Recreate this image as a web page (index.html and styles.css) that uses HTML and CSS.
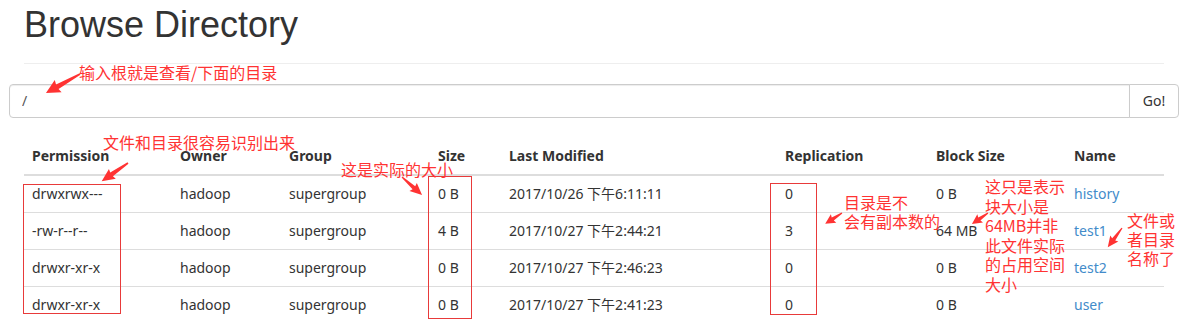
FILE: index.html
```html
<!DOCTYPE html>
<html lang="zh-CN">
<head>
  <meta charset="UTF-8" />
  <meta name="viewport" content="width=device-width, initial-scale=1" />
  <title>Browsing HDFS</title>
  <link rel="stylesheet" href="styles.css">
</head>
<body>

  <div class="page">
    <h1 class="title">Browse Directory</h1>
    <hr class="rule">

    <form class="search">
      <input class="path" type="text" value="/" />
      <button class="go" type="button">Go!</button>
    </form>

    <table class="listing">
      <colgroup>
        <col class="c-perm"><col class="c-owner"><col class="c-group"><col class="c-size">
        <col class="c-mod"><col class="c-rep"><col class="c-block"><col class="c-name">
      </colgroup>
      <thead>
        <tr>
          <th>Permission</th><th>Owner</th><th>Group</th><th>Size</th>
          <th>Last Modified</th><th>Replication</th><th>Block Size</th><th>Name</th>
        </tr>
      </thead>
      <tbody>
        <tr>
          <td>drwxrwx---</td><td>hadoop</td><td>supergroup</td><td>0 B</td>
          <td>2017/10/26 下午6:11:11</td><td>0</td><td>0 B</td><td><a href="#">history</a></td>
        </tr>
        <tr>
          <td>-rw-r--r--</td><td>hadoop</td><td>supergroup</td><td>4 B</td>
          <td>2017/10/27 下午2:44:21</td><td>3</td><td>64 MB</td><td><a href="#">test1</a></td>
        </tr>
        <tr>
          <td>drwxr-xr-x</td><td>hadoop</td><td>supergroup</td><td>0 B</td>
          <td>2017/10/27 下午2:46:23</td><td>0</td><td>0 B</td><td><a href="#">test2</a></td>
        </tr>
        <tr>
          <td>drwxr-xr-x</td><td>hadoop</td><td>supergroup</td><td>0 B</td>
          <td>2017/10/27 下午2:41:23</td><td>0</td><td>0 B</td><td><a href="#">user</a></td>
        </tr>
      </tbody>
    </table>
  </div>

  <!-- red annotations drawn over the screenshot -->
  <div class="notes">
    <div class="box box-perm"></div>
    <div class="box box-size"></div>
    <div class="box box-rep"></div>

    <div class="note note-path">输入根就是查看/下面的目录</div>
    <div class="note note-perm">文件和目录很容易识别出来</div>
    <div class="note note-size">这是实际的大小</div>
    <div class="note note-rep">目录是不<br>会有副本数的</div>
    <div class="note note-block">这只是表示<br>块大小是<br>64MB并非<br>此文件实际<br>的占用空间<br>大小</div>
    <div class="note note-name">文件或<br>者目录<br>名称了</div>

    <svg class="arrows" width="1181" height="319" viewBox="0 0 1181 319">
      <g fill="#f33">
        <polygon transform="translate(80 74) rotate(150.8)" points="0,-0.8 26,-2.6 25,-7 39,0 25,7 26,2.6 0,0.8" />
        <polygon transform="translate(128 163) rotate(145.3)" points="0,-0.8 20,-2.4 19,-6 32,0 19,6 20,2.4 0,0.8" />
        <polygon transform="translate(402 177) rotate(42)" points="0,-0.6 16,-2 15,-5.5 27,0 15,5.5 16,2 0,0.6" />
        <polygon transform="translate(842 213) rotate(147.1)" points="0,-0.6 11,-1.9 10,-5 20,0 10,5 11,1.9 0,0.6" />
        <polygon transform="translate(988 213) rotate(145.5)" points="0,-0.6 10.5,-1.9 9.5,-5 19.5,0 9.5,5 10.5,1.9 0,0.6" />
        <polygon transform="translate(1122 228) rotate(126.4)" points="0,-0.6 14,-1.9 13,-5 24,0 13,5 14,1.9 0,0.6" />
      </g>
    </svg>
  </div>

</body>
</html>
```

FILE: styles.css
```css
html, body {
  margin: 0;
  overflow: hidden;
}
body {
  background: #fff;
  color: #333;
  font-family: "Noto Sans", "Noto Sans CJK SC", sans-serif;
  font-size: 14px;
  line-height: 20px;
}
.page {
  padding: 0 17px 0 24px;
}
.title {
  margin: 5px 0 0 0;
  font-family: "Liberation Sans", Arial, sans-serif;
  font-size: 36px;
  font-weight: normal;
  line-height: 39.6px;
  color: #333;
}
.rule {
  margin: 18px 0 20px 0;
  border: 0;
  border-top: 1px solid #eee;
}
.search {
  display: flex;
  margin: 0 -15px;
  height: 34px;
}
.path {
  flex: 1;
  box-sizing: border-box;
  height: 34px;
  padding: 6px 12px;
  font-family: inherit;
  font-size: 14px;
  color: #555;
  border: 1px solid #ccc;
  border-radius: 4px 0 0 4px;
  outline: none;
  box-shadow: inset 0 1px 1px rgba(0,0,0,0.075);
}
.go {
  box-sizing: border-box;
  width: 50px;
  height: 34px;
  margin-left: -1px;
  padding: 6px 12px;
  font-family: inherit;
  font-size: 14px;
  color: #333;
  background: #fff;
  border: 1px solid #ccc;
  border-radius: 0 4px 4px 0;
}
.listing {
  width: 100%;
  margin-top: 20px;
  border-collapse: collapse;
  table-layout: fixed;
}
.c-perm { width: 148px; }
.c-owner { width: 109px; }
.c-group { width: 149px; }
.c-size { width: 71px; }
.c-mod { width: 276px; }
.c-rep { width: 151px; }
.c-block { width: 138px; }
.c-name { width: 98px; }
.listing th {
  text-align: left;
  font-weight: bold;
  padding: 8px;
  border-bottom: 2px solid #ddd;
  white-space: nowrap;
}
.listing td {
  padding: 8px;
  border-top: 1px solid #ddd;
  white-space: nowrap;
}
.listing tbody tr:first-child td {
  border-top: 0;
}
.listing a {
  color: #428bca;
  text-decoration: none;
}

/* annotations */
.notes {
  position: absolute;
  left: 0;
  top: 0;
  width: 1181px;
  height: 319px;
  pointer-events: none;
}
.arrows {
  position: absolute;
  left: 0;
  top: 0;
}
.box {
  position: absolute;
  border: 1px solid #e83a3a;
}
.box-perm { left: 23px; top: 184px; width: 96px; height: 128px; }
.box-size { left: 428px; top: 176px; width: 42px; height: 141px; }
.box-rep { left: 770px; top: 183px; width: 45px; height: 130px; }
.note {
  position: absolute;
  color: #f33;
  font-family: "Noto Sans CJK SC", "Noto Sans", sans-serif;
  font-size: 16px;
  line-height: 20px;
  white-space: nowrap;
}
.note-path { left: 79px; top: 62px; }
.note-perm { left: 103px; top: 132px; }
.note-size { left: 341px; top: 159px; }
.note-rep { left: 844px; top: 193px; line-height: 19px; }
.note-block { left: 985px; top: 177px; line-height: 19.5px; }
.note-name { left: 1127px; top: 211px; line-height: 18.8px; }
```
